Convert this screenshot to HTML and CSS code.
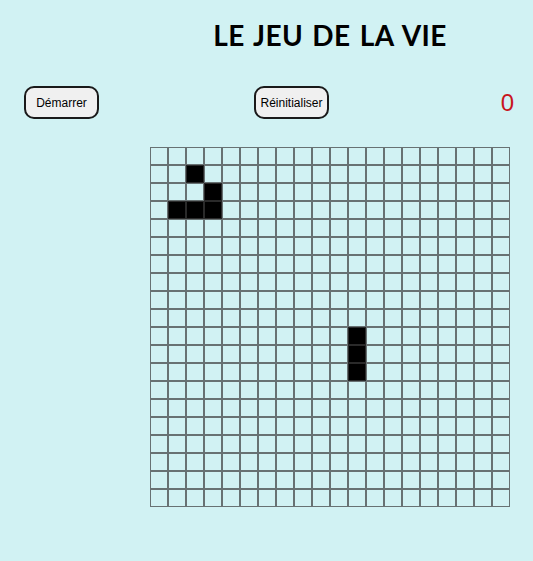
FILE: index.html
```html
<!DOCTYPE html>
<html lang="fr">
<head>
<meta charset="utf-8">
<title>Le jeu de la vie</title>
<link rel="stylesheet" href="styles.css">
</head>
<body>
<header class="title-wrap">
  <h1 class="title">LE JEU DE LA VIE</h1>
</header>
<div class="controls">
  <button class="btn" type="button">Démarrer</button>
  <button class="btn btn-reset" type="button">Réinitialiser</button>
  <span class="counter">0</span>
</div>
<div class="board" id="board"></div>
<script src="script.js"></script>
</body>
</html>
```
FILE: styles.css
```css
html, body {
  margin: 0;
  padding: 0;
}
body {
  background: #d1f2f3;
  width: 533px;
  height: 561px;
  overflow: hidden;
  font-family: "Liberation Sans", Arial, sans-serif;
}
.title-wrap {
  margin-left: 150px;
  width: 360px;
  padding-top: 15px;
}
.title {
  margin: 0;
  text-align: center;
  font-family: Lato, "DejaVu Sans", sans-serif;
  font-weight: 700;
  font-size: 28px;
  line-height: 40px;
  letter-spacing: 0.4px;
  word-spacing: 2px;
  color: #000;
}
.controls {
  display: flex;
  align-items: center;
  padding: 0 19px 0 24px;
  margin-top: 31px;
}
.btn {
  width: 75px;
  height: 33px;
  padding: 0;
  border: 2px solid #1a1a1a;
  border-radius: 10px;
  background: #f0f0f0;
  font-family: "Liberation Sans", Arial, sans-serif;
  font-size: 12px;
  color: #000;
}
.btn-reset {
  margin-left: 155px;
}
.counter {
  margin-left: auto;
  color: #c8161d;
  font-size: 24px;
  line-height: 28px;
}
.board {
  margin: 28px 0 0 150px;
  width: 360px;
  display: grid;
  grid-template-columns: repeat(20, 18px);
  grid-auto-rows: 18px;
}
.cell {
  box-sizing: border-box;
  border: 1px solid rgba(60, 60, 60, 0.7);
}
.cell.alive {
  background: #000;
}
```
FILE: script.js
```js
var board = document.getElementById('board');
var alive = {'1,2':1,'2,3':1,'3,1':1,'3,2':1,'3,3':1,'10,11':1,'11,11':1,'12,11':1};
for (var r = 0; r < 20; r++) {
  for (var c = 0; c < 20; c++) {
    var d = document.createElement('div');
    d.className = 'cell' + (alive[r + ',' + c] ? ' alive' : '');
    board.appendChild(d);
  }
}
```
